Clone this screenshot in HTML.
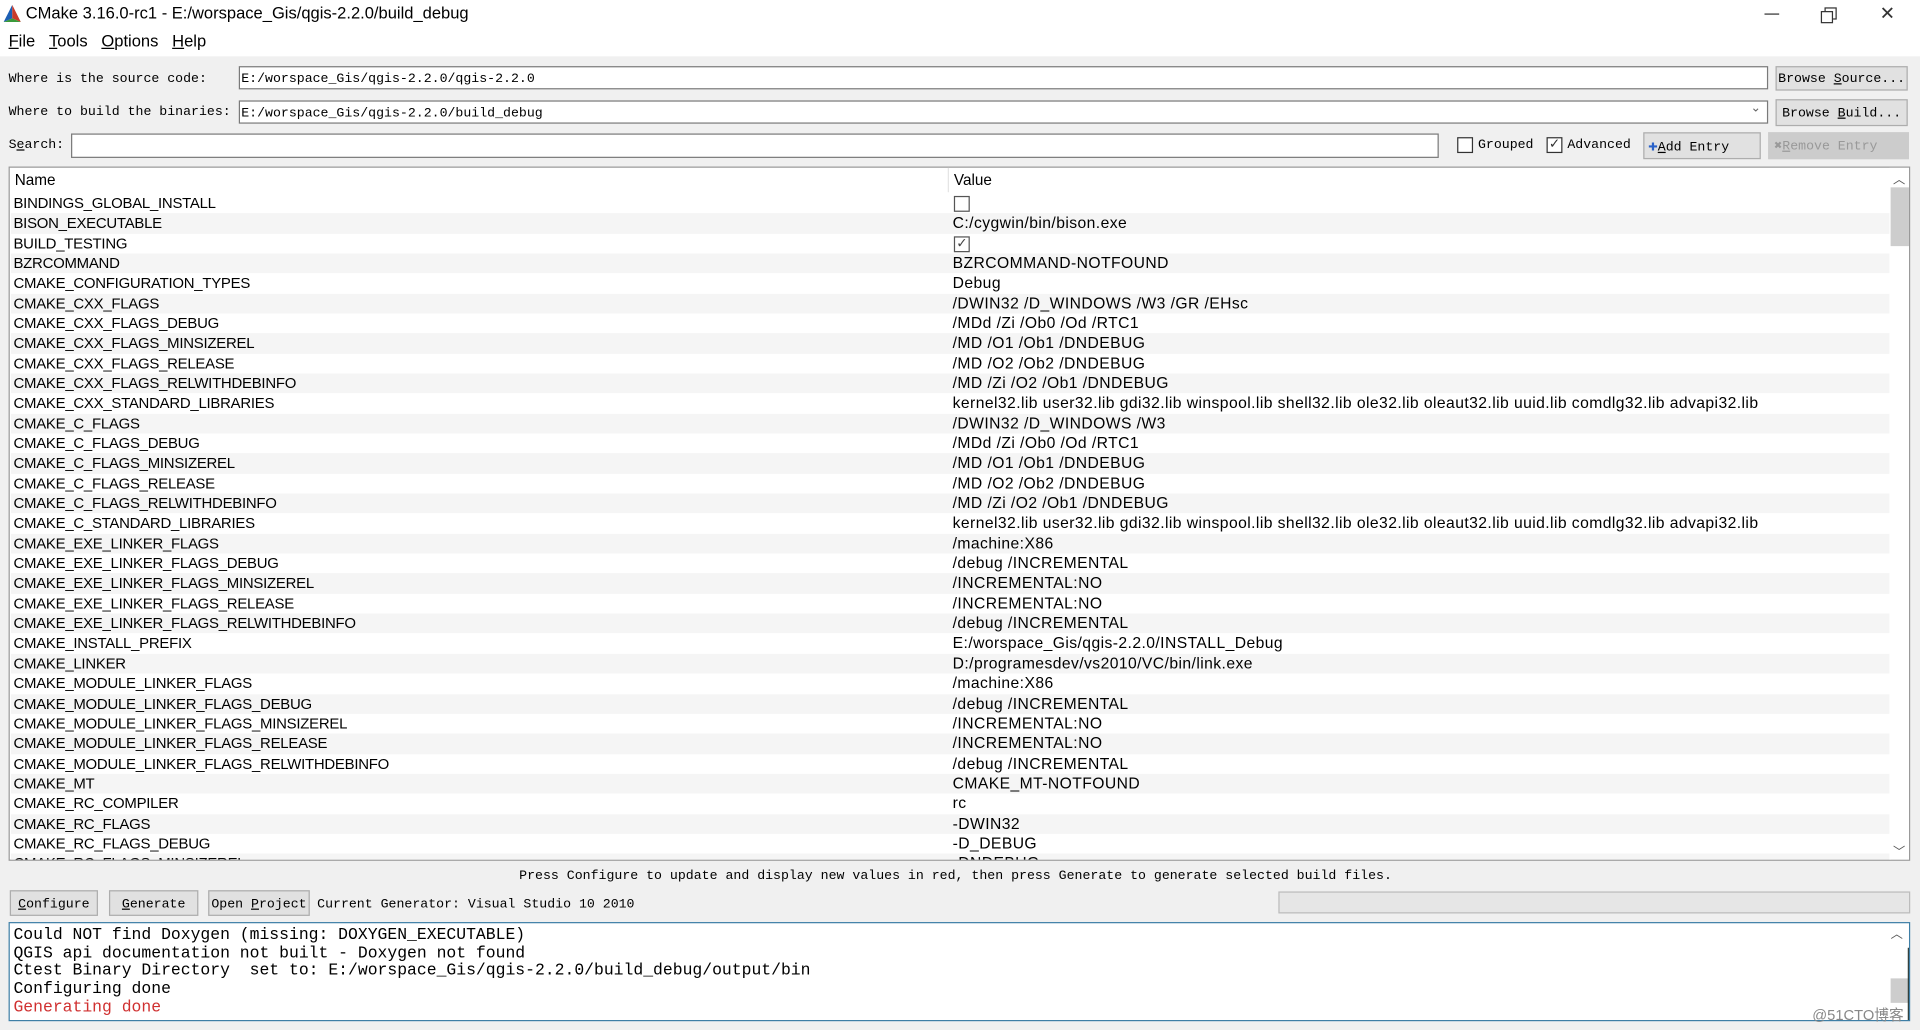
<!DOCTYPE html>
<html><head><meta charset="utf-8">
<style>
html,body{margin:0;padding:0;width:1920px;height:1030px;overflow:hidden;background:#f0f0f0}
#w{position:absolute;left:0;top:0;width:1568px;height:841px;transform:scale(1.22449);transform-origin:0 0;background:#f0f0f0;font-family:"Liberation Sans",sans-serif;color:#000}
.a{position:absolute}
.m{font-family:"Liberation Mono",monospace;font-size:10.8px;white-space:pre}
.inp{position:absolute;background:#fff;border:1px solid #7a7a7a;box-sizing:border-box;height:19px}
.btn{position:absolute;background:#e1e1e1;border:1px solid #adadad;box-sizing:border-box;font-family:"Liberation Mono",monospace;font-size:10.8px;text-align:center;white-space:pre}
.cb{position:absolute;width:11px;height:11px;border:1px solid #333;background:#fff;box-sizing:border-box}
.row{position:absolute;left:0;width:1535px;height:16.34px;font-size:12.2px;line-height:16.34px;white-space:nowrap}
.row:nth-child(even){background:#f5f5f5}
.row span{position:absolute}
.n{left:2px;letter-spacing:-0.2px}.v{left:769px;font-size:12.8px;letter-spacing:0.35px}
</style></head><body><div id="w">
<div class="a" style="left:0;top:0;width:1568px;height:46px;background:#fff"></div>
<svg class="a" style="left:2px;top:3px" width="16" height="16" viewBox="0 0 16 16"><polygon points="8,1 1,15 8,12" fill="#1d5fb4"/><polygon points="8,1 15,15 8,12" fill="#c93a2b"/><polygon points="1,15 15,15 8,12" fill="#3a9a3a"/></svg>
<div class="a" style="left:21px;top:3px;font-size:13.5px">CMake 3.16.0-rc1 - E:/worspace_Gis/qgis-2.2.0/build_debug</div>
<div class="a" style="left:1441px;top:11px;width:12px;height:1px;background:#333"></div>
<div class="a" style="left:1490px;top:6px;width:8px;height:8px;border:1px solid #333"></div>
<div class="a" style="left:1487px;top:9px;width:8px;height:8px;border:1px solid #333;background:#fff"></div>
<div class="a" style="left:1535px;top:2px;font-size:15px;color:#333">✕</div>
<div class="a" style="left:7px;top:26px;font-size:13.5px"><u>F</u>ile&nbsp;&nbsp;&nbsp;<u>T</u>ools&nbsp;&nbsp;&nbsp;<u>O</u>ptions&nbsp;&nbsp;&nbsp;<u>H</u>elp</div>

<div class="a m" style="left:7px;top:59px">Where is the source code:</div>
<div class="inp" style="left:195px;top:54px;width:1249px"><span class="m" style="position:absolute;left:1px;top:4px">E:/worspace_Gis/qgis-2.2.0/qgis-2.2.0</span></div>
<div class="btn" style="left:1450px;top:54px;width:108px;height:20px;line-height:20px">Browse <u>S</u>ource...</div>
<div class="a m" style="left:7px;top:86px">Where to build the binaries:</div>
<div class="inp" style="left:195px;top:82px;width:1249px"><span class="m" style="position:absolute;left:1px;top:4px">E:/worspace_Gis/qgis-2.2.0/build_debug</span><span style="position:absolute;right:5px;top:0;font-size:10px;color:#666">⌄</span></div>
<div class="btn" style="left:1450px;top:81px;width:108px;height:22px;line-height:22px">Browse <u>B</u>uild...</div>
<div class="a m" style="left:7px;top:113px">S<u>e</u>arch:</div>
<div class="inp" style="left:58px;top:109px;width:1117px;height:20px"></div>
<div class="cb" style="left:1190px;top:112px;width:13px;height:13px"></div>
<div class="a m" style="left:1207px;top:113px">Grouped</div>
<div class="cb" style="left:1263px;top:112px;width:13px;height:13px;font-size:11px;line-height:11px;text-align:center;color:#333">✓</div>
<div class="a m" style="left:1280px;top:113px">Advanced</div>
<div class="btn" style="left:1342px;top:108px;width:96px;height:22px;line-height:22px;text-align:left;padding-left:3px"><span style="color:#2a62c9;font-weight:bold;font-size:13px">✚</span><u>A</u>dd Entry</div>
<div class="btn" style="left:1444px;top:108px;width:115px;height:22px;line-height:22px;color:#999;background:#ccc;border-color:#ccc;text-align:left;padding-left:4px">✖<u>R</u>emove Entry</div>

<div class="a" style="left:7px;top:136px;width:1553px;height:567px;background:#fff;border:1px solid #999;box-sizing:border-box;overflow:hidden">
 <div class="a" style="left:4px;top:3px;font-size:12.5px">Name</div>
 <div class="a" style="left:766px;top:0;width:1px;height:20px;background:#e5e5e5"></div>
 <div class="a" style="left:771px;top:3px;font-size:12.5px">Value</div>
 <div class="a" style="left:1px;top:21px;width:1535px;height:546px">
<div class="row" style="top:0"><span class="n">BINDINGS_GLOBAL_INSTALL</span><span class="cb" style="left:770px;top:2px;width:13px;height:13px;border-color:#555"></span></div>
<div class="row" style="top:16.34px"><span class="n">BISON_EXECUTABLE</span><span class="v">C:/cygwin/bin/bison.exe</span></div>
<div class="row" style="top:32.68px"><span class="n">BUILD_TESTING</span><span class="cb" style="left:770px;top:2px;width:13px;height:13px;border-color:#555;font-size:11px;line-height:11px;text-align:center;color:#444">✓</span></div>
<div class="row" style="top:49.02px"><span class="n">BZRCOMMAND</span><span class="v">BZRCOMMAND-NOTFOUND</span></div>
<div class="row" style="top:65.36px"><span class="n">CMAKE_CONFIGURATION_TYPES</span><span class="v">Debug</span></div>
<div class="row" style="top:81.7px"><span class="n">CMAKE_CXX_FLAGS</span><span class="v">/DWIN32 /D_WINDOWS /W3 /GR /EHsc</span></div>
<div class="row" style="top:98.04px"><span class="n">CMAKE_CXX_FLAGS_DEBUG</span><span class="v">/MDd /Zi /Ob0 /Od /RTC1</span></div>
<div class="row" style="top:114.38px"><span class="n">CMAKE_CXX_FLAGS_MINSIZEREL</span><span class="v">/MD /O1 /Ob1 /DNDEBUG</span></div>
<div class="row" style="top:130.72px"><span class="n">CMAKE_CXX_FLAGS_RELEASE</span><span class="v">/MD /O2 /Ob2 /DNDEBUG</span></div>
<div class="row" style="top:147.06px"><span class="n">CMAKE_CXX_FLAGS_RELWITHDEBINFO</span><span class="v">/MD /Zi /O2 /Ob1 /DNDEBUG</span></div>
<div class="row" style="top:163.4px"><span class="n">CMAKE_CXX_STANDARD_LIBRARIES</span><span class="v">kernel32.lib user32.lib gdi32.lib winspool.lib shell32.lib ole32.lib oleaut32.lib uuid.lib comdlg32.lib advapi32.lib</span></div>
<div class="row" style="top:179.74px"><span class="n">CMAKE_C_FLAGS</span><span class="v">/DWIN32 /D_WINDOWS /W3</span></div>
<div class="row" style="top:196.08px"><span class="n">CMAKE_C_FLAGS_DEBUG</span><span class="v">/MDd /Zi /Ob0 /Od /RTC1</span></div>
<div class="row" style="top:212.42px"><span class="n">CMAKE_C_FLAGS_MINSIZEREL</span><span class="v">/MD /O1 /Ob1 /DNDEBUG</span></div>
<div class="row" style="top:228.76px"><span class="n">CMAKE_C_FLAGS_RELEASE</span><span class="v">/MD /O2 /Ob2 /DNDEBUG</span></div>
<div class="row" style="top:245.1px"><span class="n">CMAKE_C_FLAGS_RELWITHDEBINFO</span><span class="v">/MD /Zi /O2 /Ob1 /DNDEBUG</span></div>
<div class="row" style="top:261.44px"><span class="n">CMAKE_C_STANDARD_LIBRARIES</span><span class="v">kernel32.lib user32.lib gdi32.lib winspool.lib shell32.lib ole32.lib oleaut32.lib uuid.lib comdlg32.lib advapi32.lib</span></div>
<div class="row" style="top:277.78px"><span class="n">CMAKE_EXE_LINKER_FLAGS</span><span class="v">/machine:X86</span></div>
<div class="row" style="top:294.12px"><span class="n">CMAKE_EXE_LINKER_FLAGS_DEBUG</span><span class="v">/debug /INCREMENTAL</span></div>
<div class="row" style="top:310.46px"><span class="n">CMAKE_EXE_LINKER_FLAGS_MINSIZEREL</span><span class="v">/INCREMENTAL:NO</span></div>
<div class="row" style="top:326.8px"><span class="n">CMAKE_EXE_LINKER_FLAGS_RELEASE</span><span class="v">/INCREMENTAL:NO</span></div>
<div class="row" style="top:343.14px"><span class="n">CMAKE_EXE_LINKER_FLAGS_RELWITHDEBINFO</span><span class="v">/debug /INCREMENTAL</span></div>
<div class="row" style="top:359.48px"><span class="n">CMAKE_INSTALL_PREFIX</span><span class="v">E:/worspace_Gis/qgis-2.2.0/INSTALL_Debug</span></div>
<div class="row" style="top:375.82px"><span class="n">CMAKE_LINKER</span><span class="v">D:/programesdev/vs2010/VC/bin/link.exe</span></div>
<div class="row" style="top:392.16px"><span class="n">CMAKE_MODULE_LINKER_FLAGS</span><span class="v">/machine:X86</span></div>
<div class="row" style="top:408.5px"><span class="n">CMAKE_MODULE_LINKER_FLAGS_DEBUG</span><span class="v">/debug /INCREMENTAL</span></div>
<div class="row" style="top:424.84px"><span class="n">CMAKE_MODULE_LINKER_FLAGS_MINSIZEREL</span><span class="v">/INCREMENTAL:NO</span></div>
<div class="row" style="top:441.18px"><span class="n">CMAKE_MODULE_LINKER_FLAGS_RELEASE</span><span class="v">/INCREMENTAL:NO</span></div>
<div class="row" style="top:457.52px"><span class="n">CMAKE_MODULE_LINKER_FLAGS_RELWITHDEBINFO</span><span class="v">/debug /INCREMENTAL</span></div>
<div class="row" style="top:473.86px"><span class="n">CMAKE_MT</span><span class="v">CMAKE_MT-NOTFOUND</span></div>
<div class="row" style="top:490.2px"><span class="n">CMAKE_RC_COMPILER</span><span class="v">rc</span></div>
<div class="row" style="top:506.54px"><span class="n">CMAKE_RC_FLAGS</span><span class="v">-DWIN32</span></div>
<div class="row" style="top:522.88px"><span class="n">CMAKE_RC_FLAGS_DEBUG</span><span class="v">-D_DEBUG</span></div>
<div class="row" style="top:539.22px"><span class="n">CMAKE_RC_FLAGS_MINSIZEREL</span><span class="v">-DNDEBUG</span></div>
 </div>
 <div class="a" style="left:1535px;top:0;width:17px;height:566px;background:#fff"></div>
 <div class="a" style="left:1538px;top:1px;font-size:10px;color:#555">︿</div>
 <div class="a" style="left:1536px;top:16px;width:15px;height:48px;background:#cdcdcd"></div>
 <div class="a" style="left:1538px;top:550px;font-size:10px;color:#555">﹀</div>
</div>

<div class="a m" style="left:424px;top:710px">Press Configure to update and display new values in red, then press Generate to generate selected build files.</div>
<div class="btn" style="left:8px;top:727px;width:72px;height:21px;line-height:22px"><u>C</u>onfigure</div>
<div class="btn" style="left:89px;top:727px;width:73px;height:21px;line-height:22px"><u>G</u>enerate</div>
<div class="btn" style="left:170px;top:727px;width:83px;height:21px;line-height:22px">Open <u>P</u>roject</div>
<div class="a m" style="left:259px;top:733px">Current Generator: Visual Studio 10 2010</div>
<div class="a" style="left:1044px;top:728px;width:516px;height:18px;background:#e6e6e6;border:1px solid #bcbcbc;box-sizing:border-box"></div>

<div class="a" style="left:7px;top:753px;width:1553px;height:81px;background:#fff;border:1px solid #3f7fa6;box-sizing:border-box;overflow:hidden">
 <div class="a" style="left:3px;top:4px;font-family:'Liberation Mono',monospace;font-size:13.4px;line-height:14.7px;white-space:pre">Could NOT find Doxygen (missing: DOXYGEN_EXECUTABLE)
QGIS api documentation not built - Doxygen not found
Ctest Binary Directory  set to: E:/worspace_Gis/qgis-2.2.0/build_debug/output/bin
Configuring done
<span style="color:#d03030">Generating done</span></div>
 <div class="a" style="left:1536px;top:0;font-size:10px;color:#555">︿</div>
 <div class="a" style="left:1536px;top:45px;width:15px;height:20px;background:#cdcdcd"></div>
 <div class="a" style="left:1550px;top:20px;width:3px;height:60px;background:#2f3d3a"></div>
</div>
<div class="a" style="left:1480px;top:820px;font-size:12px;color:#888;font-family:'Liberation Sans','Noto Sans CJK SC',sans-serif">@51CTO博客</div>
</div></body></html>
